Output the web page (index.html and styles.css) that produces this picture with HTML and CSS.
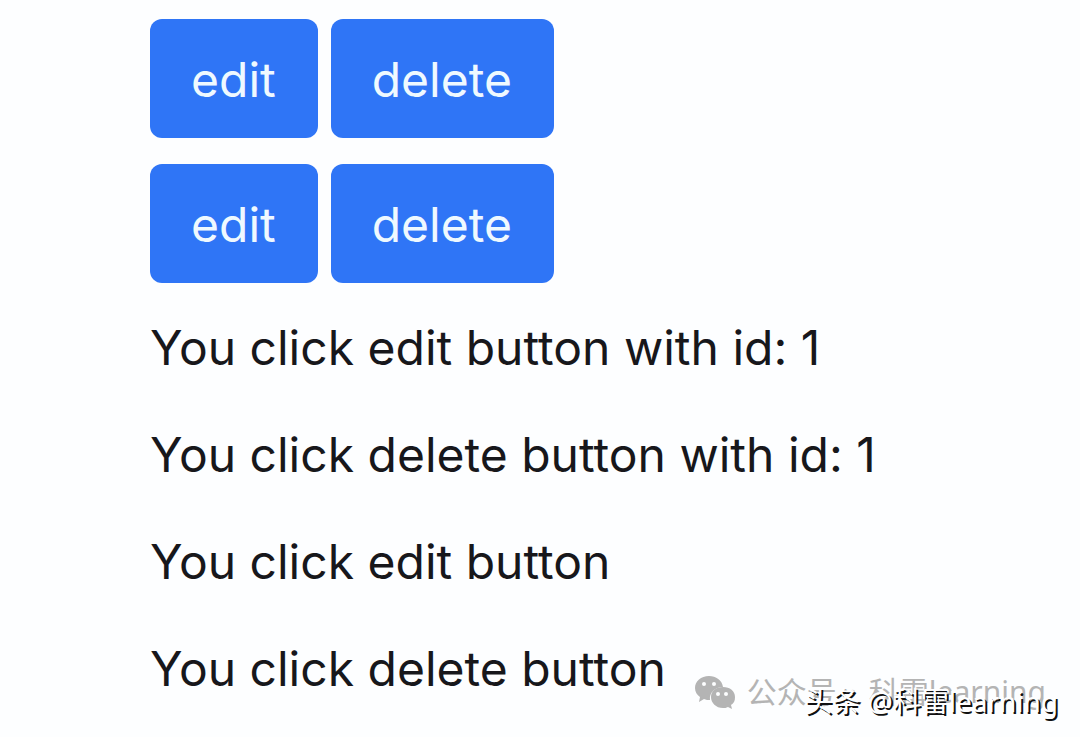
FILE: index.html
```html
<!DOCTYPE html>
<html lang="en">
<head>
<meta charset="utf-8">
<title>Edit and delete</title>
<link rel="stylesheet" href="styles.css">
</head>
<body>
<main class="page">
  <div class="actions">
    <div class="row"><button type="button" class="button">edit</button><button type="button" class="button">delete</button></div>
    <div class="row"><button type="button" class="button">edit</button><button type="button" class="button">delete</button></div>
  </div>
  <div class="log">
    <p class="message">You click edit button with id: 1</p>
    <p class="message">You click delete button with id: 1</p>
    <p class="message">You click edit button</p>
    <p class="message">You click delete button</p>
  </div>
</main>
<div class="account">
  <svg class="account-icon" viewBox="0 0 40 34" aria-hidden="true">
    <path fill="#b4b4b4" fill-rule="evenodd" d="M14 1C6 1 0 6 0 13c0 4 2 7 5 9l-1 5 5-3c2 1 4 1 6 1-1-7 5-13 13-13C27 5 21 1 14 1ZM9 7a2 2 0 1 1 0 4 2 2 0 0 1 0-4Zm10 0a2 2 0 1 1 0 4 2 2 0 0 1 0-4Z"/>
    <path fill="#b4b4b4" fill-rule="evenodd" d="M28 12c-7 0-12 4-12 10s5 11 12 11c2 0 3 0 5-1l4 2-1-4c3-2 4-4 4-8 0-6-5-10-12-10Zm-5 5a2 2 0 1 1 0 4 2 2 0 0 1 0-4Zm8 0a2 2 0 1 1 0 4 2 2 0 0 1 0-4Z"/>
  </svg>
  <span>公众号</span><span>·</span><span>科雷learning</span>
</div>
<div class="credit">头条 @科雷learning</div>
</body>
</html>
```
FILE: styles.css
```css
body {
  margin: 0;
  background: #fdfeff;
  color: #17171b;
  font-family: Inter, "Noto Sans CJK SC", sans-serif;
  font-size: 48px;
}
.page {
  padding: 19px 24px 0 150px;
}
.actions {
  display: grid;
  gap: 26px;
}
.row {
  display: flex;
  gap: 13px;
}
.button {
  height: 119px;
  padding: 2px 42px 0 41px;
  border: 0;
  border-radius: 12px;
  background: #2f75f6;
  color: #eff9ff;
  font: inherit;
  line-height: 72px;
}
.log {
  display: grid;
  gap: 35px;
  padding-top: 29px;
}
.message {
  margin: 0;
  line-height: 72px;
}
.account,
.credit {
  position: absolute;
  white-space: nowrap;
  font-family: "Noto Sans", "Noto Sans CJK SC", sans-serif;
  line-height: 40px;
}
.account {
  right: 34px;
  bottom: 25px;
  display: flex;
  align-items: center;
  gap: 12px;
  color: #b4b4b4;
  font-size: 30px;
}
.account-icon {
  width: 40px;
  height: 34px;
}
.credit {
  right: 22px;
  bottom: 16px;
  color: #ffffff;
  font-size: 28px;
  text-shadow: 2px 2px 0 #111111;
}
```
